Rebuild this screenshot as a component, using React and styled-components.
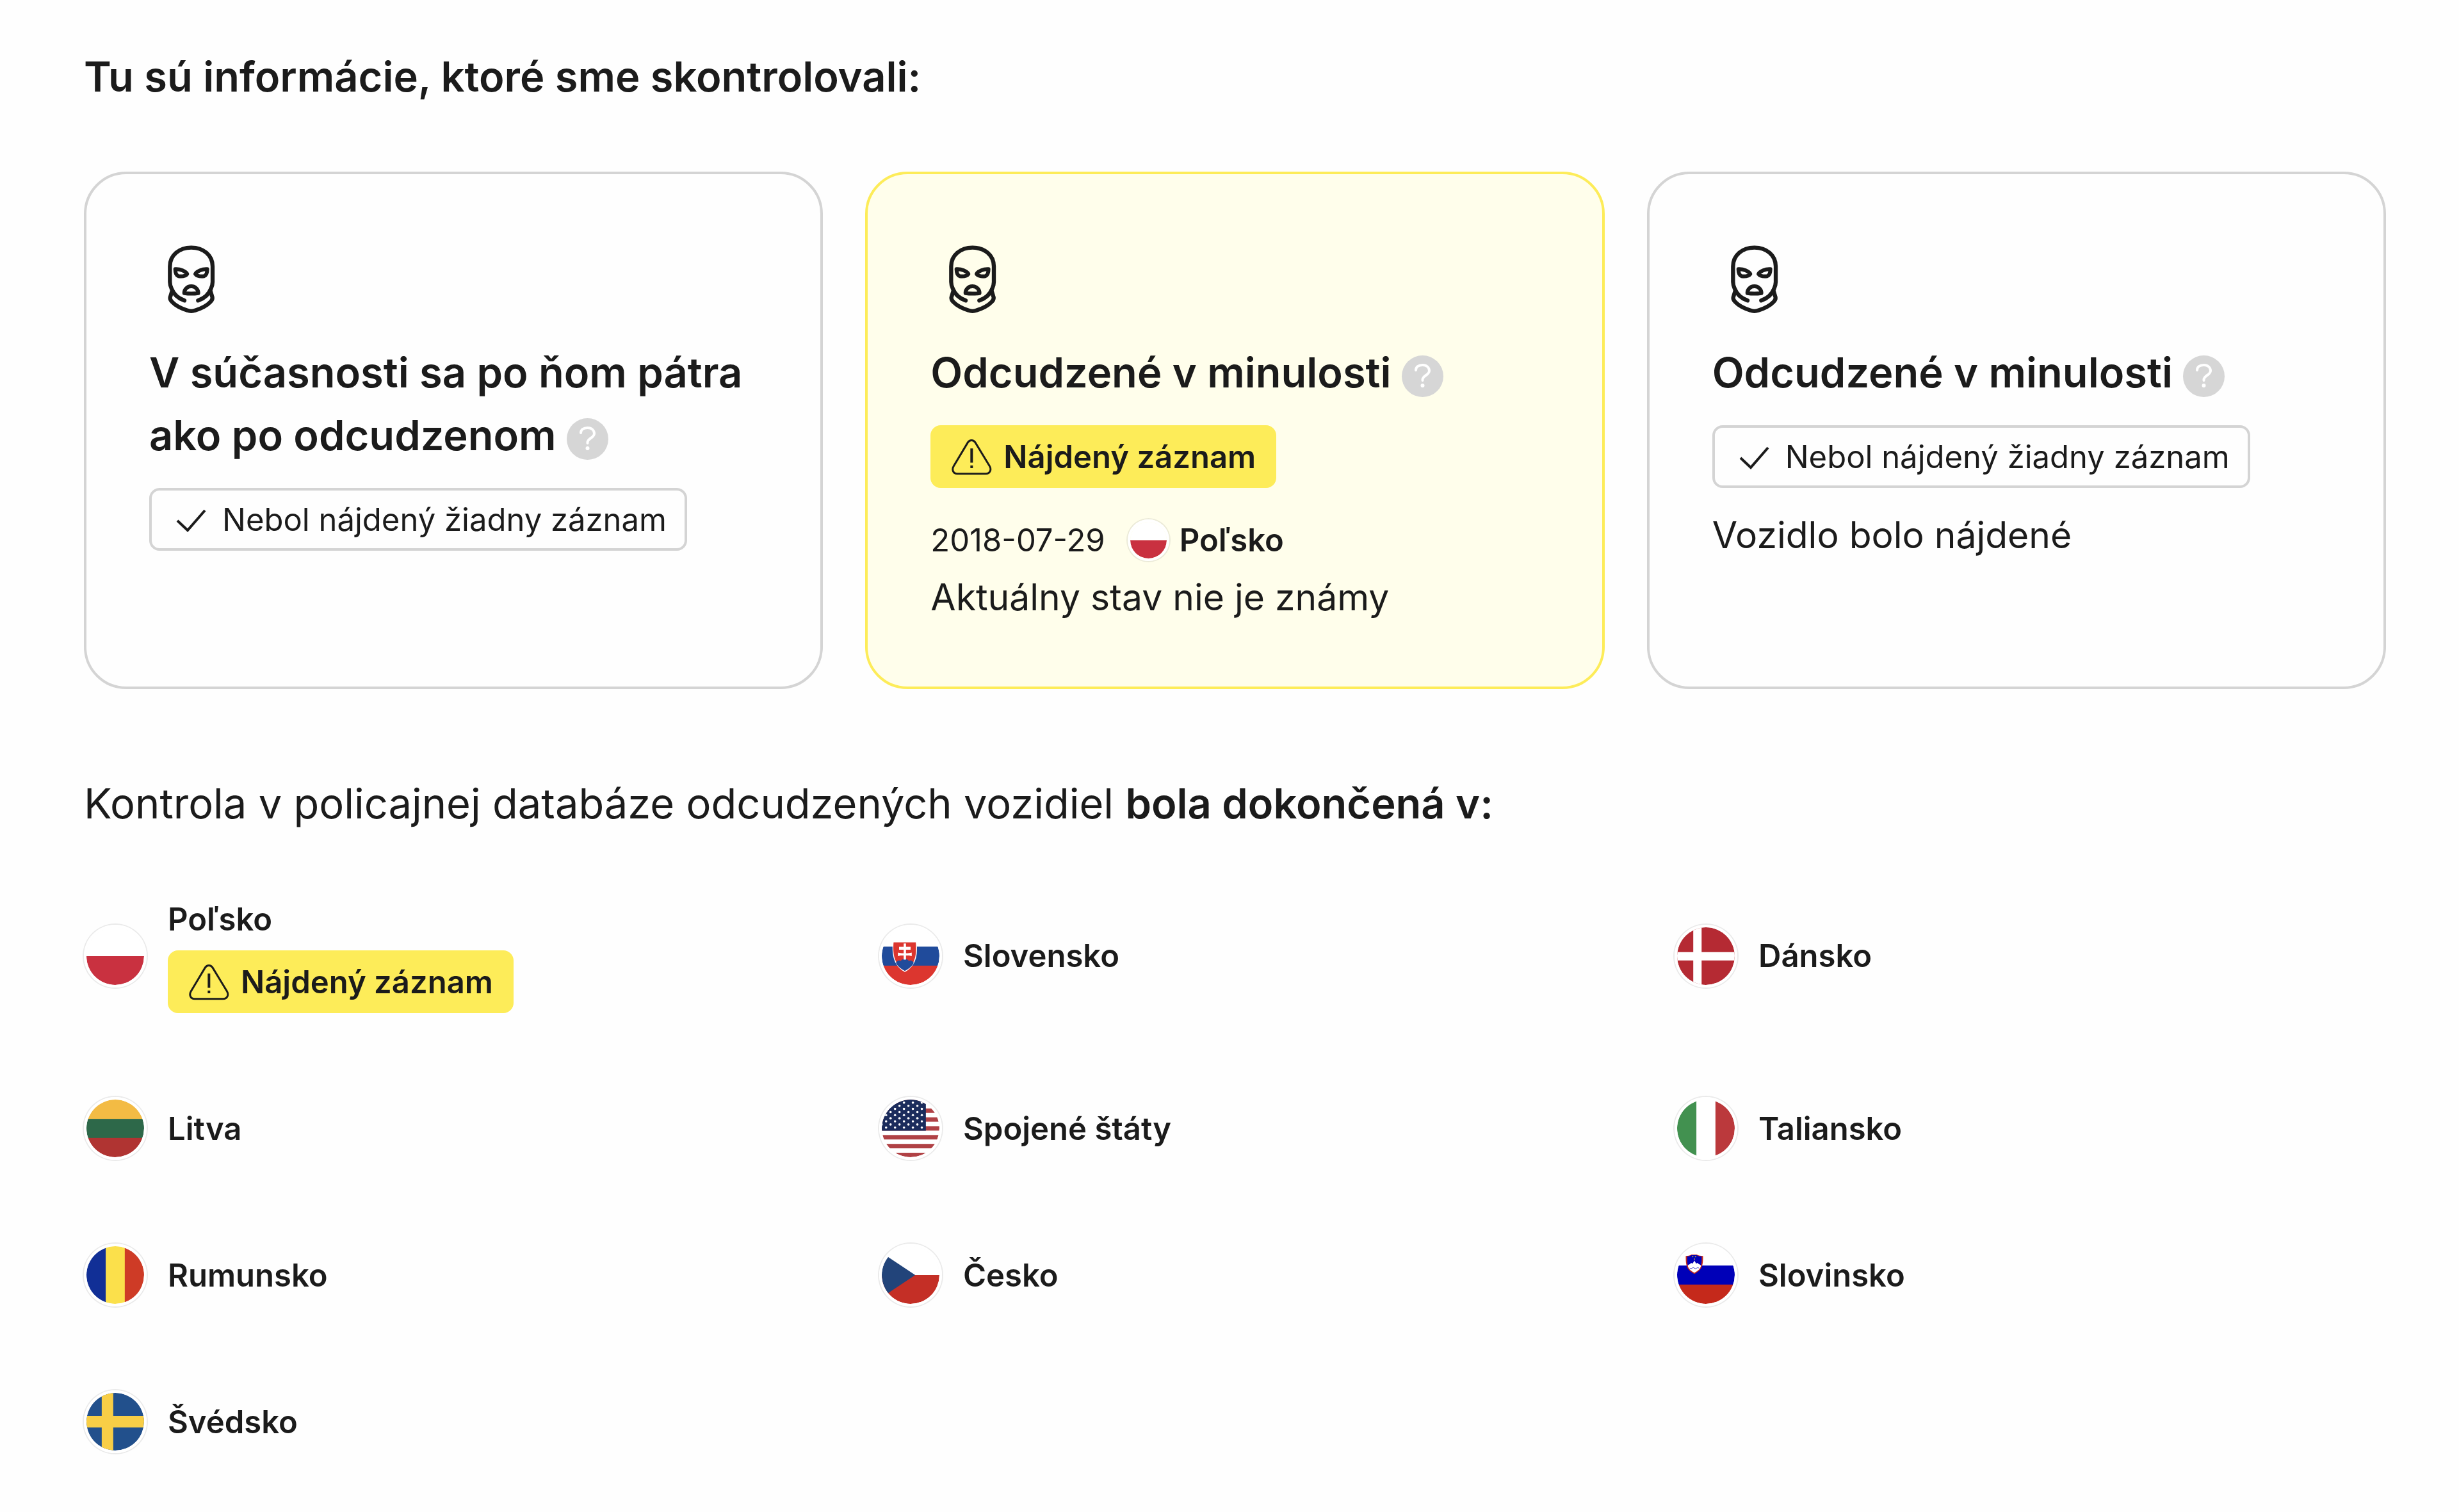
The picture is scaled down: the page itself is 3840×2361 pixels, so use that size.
import React, { useId } from 'react'
import styled, { createGlobalStyle } from 'styled-components'

const GlobalStyle = createGlobalStyle`
  *, *::before, *::after{
    box-sizing: border-box;
  }
  body{
    margin: 0;
    background-color: #fefefe;
    color: #1b1b1b;
    font-family: Inter, "Liberation Sans", sans-serif;
  }
`

const Page = styled.main`
  padding: 71px 114px 92px 131px;
`
const Heading = styled.h2`
  margin: 0 0 99px;
  font-size: 65px;
  line-height: 98px;
  font-weight: ${(props) => (props.$regular ? 400 : 600)};
  strong{
    font-weight: 600;
  }
`
const Cards = styled.section`
  display: grid;
  grid-template-columns: repeat(3, 1fr);
  gap: 66px;
  margin-bottom: 130px;
`
const CardBox = styled.article`
  display: flex;
  flex-direction: column;
  align-items: flex-start;
  padding: 98px;
  border: 4px solid ${(props) => (props.$found ? '#fdec59' : '#d4d4d4')};
  border-radius: 66px;
  background-color: ${(props) => (props.$found ? '#fffeeb' : '#fefefe')};
`
const MaskSvg = styled.svg`
  display: block;
  width: 131px;
  height: 131px;
  margin-bottom: 32px;
`
const CardTitle = styled.h3`
  margin: 0 0 33px;
  font-size: 65px;
  line-height: 98px;
  font-weight: 600;
`
const HelpButton = styled.button`
  display: inline-block;
  width: 65px;
  height: 65px;
  padding: 0;
  border: 0;
  border-radius: 50%;
  background-color: #d6d6d6;
  vertical-align: middle;
  cursor: pointer;
  svg{
    display: block;
    width: 65px;
    height: 65px;
  }
`
const BadgeBox = styled.span`
  display: inline-flex;
  align-items: center;
  gap: 17px;
  height: 98px;
  padding: 0 28px;
  border: 4px solid ${(props) => (props.$found ? '#fdec59' : '#d4d4d4')};
  border-radius: 16px;
  background-color: ${(props) => (props.$found ? '#fdec59' : '#fefefe')};
  font-size: 49px;
  line-height: 65px;
  font-weight: ${(props) => (props.$found ? 600 : 400)};
  white-space: nowrap;
  svg{
    width: 65px;
    height: 65px;
  }
`
const Details = styled.div`
  margin-top: 33px;
`
const RecordRow = styled.div`
  display: flex;
  align-items: center;
  height: 97px;
  font-size: 49px;
  strong{
    font-weight: 600;
  }
`
const RecordDate = styled.time`
  margin-right: 35px;
`
const State = styled.p`
  margin: 0;
  font-size: 57px;
  line-height: 82px;
`
const FlagRing = styled.span`
  flex: none;
  width: ${(props) => (props.$small ? 65 : 98)}px;
  height: ${(props) => (props.$small ? 65 : 98)}px;
  margin-right: ${(props) => (props.$small ? 16 : 33)}px;
  border: 4px solid #fff;
  border-radius: 50%;
  box-shadow: 0 0 0 2px rgba(0, 0, 0, 0.08);
  svg{
    display: block;
    width: 100%;
    height: 100%;
    border-radius: 50%;
  }
`
const Countries = styled.ul`
  display: grid;
  grid-template-columns: repeat(3, 1fr);
  gap: 131px;
  margin: 0;
  padding: 0;
  list-style-type: none;
`
const Country = styled.li`
  display: flex;
  align-items: center;
`
const CountryInfo = styled.div`
  display: flex;
  flex-direction: column;
  align-items: flex-start;
  gap: 16px;
`
const CountryName = styled.span`
  font-size: 49px;
  line-height: 65px;
  font-weight: 600;
`

const Rows = ({ colors }) => (
  <>
    <rect width="100" height="34" fill={colors[0]} />
    <rect y="33.5" width="100" height="34" fill={colors[1]} />
    <rect y="66.5" width="100" height="34" fill={colors[2]} />
  </>
)

const Columns = ({ colors }) => (
  <>
    <rect width="34" height="100" fill={colors[0]} />
    <rect x="33.5" width="34" height="100" fill={colors[1]} />
    <rect x="66.5" width="34" height="100" fill={colors[2]} />
  </>
)

// rows of six and five stars in turn, the first column falls outside the circle
const usStars = []
for (let row = 0; row < 9; row++) {
  for (let col = 0; col < (row % 2 ? 5 : 6); col++) {
    usStars.push([-8 + (row % 2 ? 7.75 : 0) + col * 15.5, 5.4 + row * 5.4])
  }
}

const flags = {
  pl: (
    <>
      <rect width="100" height="50" fill="#fff" />
      <rect y="50" width="100" height="50" fill="#c93140" />
    </>
  ),
  sk: (
    <>
      <Rows colors={['#fff', '#204b9b', '#dc362f']} />
      <path d="M19 24.5H60.5C62 42 62.5 66 40 77.5C17.5 66 18 42 19 24.5Z" fill="#fff" />
      <path d="M20.5 26H59C60.5 43 60 64 40 75.5C20 64 19 43 20.5 26Z" fill="#dc362f" />
      <path d="M24.5 62C26 57.5 31 56.5 33 58.5C35 54 45 54 47 58.5C49 56.5 54 57.5 55.5 62C52 68 47 72 40 75.5C33 72 28 68 24.5 62Z" fill="#204b9b" />
      <path d="M38 28h4v6h8v5h-8v6c4 0 7 0 10-1v6c-3-1-6-1-10-1v7h-4v-7c-4 0-7 0-10 1v-6c3 1 6 1 10 1v-6h-8v-5h8Z" fill="#fff" />
    </>
  ),
  dk: (
    <>
      <rect width="100" height="100" fill="#b52a33" />
      <path d="M28 0h14.5v100H28ZM0 43h100v14.5H0Z" fill="#fff" />
    </>
  ),
  lt: <Rows colors={['#f3bb44', '#2d6849', '#b03432']} />,
  us: (
    <>
      <rect width="100" height="100" fill="#fff" />
      {[0, 2, 4, 6, 8, 10, 12].map((i) => (
        <rect key={i} y={i * 7.69} width="100" height="7.69" fill="#b04145" />
      ))}
      <rect width="76.5" height="54" fill="#1b2c5c" />
      {usStars.map(([x, y]) => (
        <circle key={`${x}-${y}`} cx={x} cy={y} r="2" fill="#fff" />
      ))}
    </>
  ),
  it: <Columns colors={['#429150', '#fff', '#bb393c']} />,
  ro: <Columns colors={['#112f96', '#fbe04b', '#ce3b26']} />,
  cz: (
    <>
      <rect width="100" height="50" fill="#fff" />
      <rect y="50" width="100" height="50" fill="#c42f26" />
      <path d="M-17 0L58 50L-17 100Z" fill="#22447a" />
    </>
  ),
  si: (
    <>
      <Rows colors={['#fff', '#0000b8', '#c5291b']} />
      <path d="M15 17C19 17 22 16 25 14.5H34C37 16 41 17 45 17C45 30 45 41 30 48C15 41 15 30 15 17Z" fill="#c5291b" />
      <path d="M17.5 17.5C21 17.5 23 17 25 15.5H34C36 17 39 17.5 42.5 17.5C43 29 43 39 30 45.5C17 39 17 29 17.5 17.5Z" fill="#0000b8" />
      <path d="M18.5 34C20 31 23 32 24 29L27 30L30 25L33 30L36 29C37 32 40 31 41.5 34C40 40 36 43 30 46C24 43 20 40 18.5 34Z" fill="#fff" />
      <path d="M22 38q2 2 4 0t4 0t4 0t4 0" fill="none" stroke="#0000b8" strokeWidth="0.8" />
      <path d="M26 17l2 2M33 17l-2 2M30 21v3" stroke="#b9a23c" strokeWidth="1.5" />
    </>
  ),
  se: (
    <>
      <rect width="100" height="100" fill="#22508c" />
      <path d="M26.5 0h20v100h-20ZM0 40h100v20H0Z" fill="#f8ce46" />
    </>
  ),
}

const Flag = ({ code, small }) => {
  const clip = useId()
  return (
    <FlagRing $small={small}>
      <svg viewBox="0 0 100 100" aria-hidden="true">
        <clipPath id={clip}>
          <circle cx="50" cy="50" r="50" />
        </clipPath>
        <g clipPath={`url(#${clip})`}>{flags[code]}</g>
      </svg>
    </FlagRing>
  )
}

const MaskIcon = () => (
  <MaskSvg viewBox="-21 27 393 393" fill="none" stroke="#1b1b1b" strokeWidth="19" strokeLinecap="round" strokeLinejoin="round" aria-hidden="true">
    <path d="M144 325C116 315 94 296 84 270C78 258 76 250 76 238V165C76 112 120 77 176 77C232 77 276 112 276 165V238C276 250 274 258 268 270C258 296 236 315 208 325" />
    <path d="M86 280L77 310C76 318 79 324 86 331C104 350 132 363 158 371Q176 378 194 371C220 363 248 350 266 331C273 324 276 318 275 310L266 280" />
    <g strokeWidth="18">
      <path d="M101 178C125 176 150 188 157 200C150 210 134 213 116 211C106 207 101 192 101 178Z" />
      <path d="M251 178C227 176 202 188 195 200C202 210 218 213 236 211C246 207 251 192 251 178Z" />
      <path d="M143 290C143 275 155 258 176 258C197 258 209 275 209 290C190 293 162 293 143 290Z" />
    </g>
  </MaskSvg>
)

const WarningIcon = () => (
  <svg viewBox="77 32 196 196" fill="none" stroke="#1b1b1b" strokeWidth="9" aria-hidden="true">
    <path d="M157 61C165 48 183 48 191 61L259 173C269 190 261 209 241 209H107C87 209 80 190 90 173Z" />
    <path d="M174.5 90V157M174.5 170V183" strokeWidth="12" />
  </svg>
)

const CheckIcon = () => (
  <svg viewBox="0 0 65 65" fill="none" stroke="#1b1b1b" strokeWidth="4" aria-hidden="true">
    <path d="M12 34L28 49L55 18" />
  </svg>
)

const Help = () => (
  <HelpButton type="button" aria-label="Viac informácií">
    <svg viewBox="0 0 65 65" fill="none" stroke="#fff" strokeWidth="4" strokeLinecap="round" aria-hidden="true">
      <path d="M22 23C22 18 26 15 32.5 15C39 15 43 19 43 24C43 31 32.5 31 32.5 38V39" />
      <circle cx="32.5" cy="47" r="3" fill="#fff" stroke="none" />
    </svg>
  </HelpButton>
)

const Badge = ({ found }) => (
  <BadgeBox $found={found}>
    {found ? <WarningIcon /> : <CheckIcon />}
    {found ? 'Nájdený záznam' : 'Nebol nájdený žiadny záznam'}
  </BadgeBox>
)

const Card = ({ title, found, children }) => (
  <CardBox $found={found}>
    <MaskIcon />
    <CardTitle>{title} <Help /></CardTitle>
    <Badge found={found} />
    {children && <Details>{children}</Details>}
  </CardBox>
)

const countries = [
  { code: 'pl', name: 'Poľsko', found: true },
  { code: 'sk', name: 'Slovensko' },
  { code: 'dk', name: 'Dánsko' },
  { code: 'lt', name: 'Litva' },
  { code: 'us', name: 'Spojené štáty' },
  { code: 'it', name: 'Taliansko' },
  { code: 'ro', name: 'Rumunsko' },
  { code: 'cz', name: 'Česko' },
  { code: 'si', name: 'Slovinsko' },
  { code: 'se', name: 'Švédsko' },
]

const App = () => {
  return (
    <>
      <GlobalStyle />
      <Page>
        <Heading>Tu sú informácie, ktoré sme skontrolovali:</Heading>
        <Cards>
          <Card title="V súčasnosti sa po ňom pátra ako po odcudzenom" />
          <Card title="Odcudzené v minulosti" found>
            <RecordRow>
              <RecordDate>2018-07-29</RecordDate>
              <Flag code="pl" small />
              <strong>Poľsko</strong>
            </RecordRow>
            <State>Aktuálny stav nie je známy</State>
          </Card>
          <Card title="Odcudzené v minulosti">
            <State>Vozidlo bolo nájdené</State>
          </Card>
        </Cards>

        <Heading $regular>
          Kontrola v policajnej databáze odcudzených vozidiel <strong>bola dokončená v:</strong>
        </Heading>
        <Countries>
          {countries.map((country) => (
            <Country key={country.code}>
              <Flag code={country.code} />
              <CountryInfo>
                <CountryName>{country.name}</CountryName>
                {country.found && <Badge found />}
              </CountryInfo>
            </Country>
          ))}
        </Countries>
      </Page>
    </>
  )
}

export default App
